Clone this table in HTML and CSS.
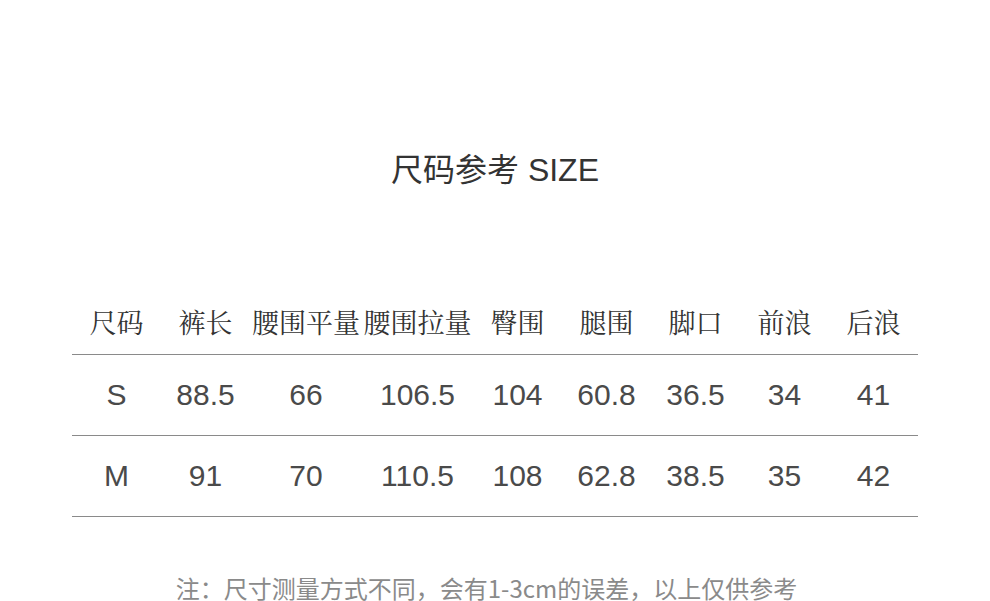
FILE: index.html
```html
<!DOCTYPE html>
<html lang="zh">
<head>
<meta charset="utf-8">
<title>尺码参考 SIZE</title>
<link rel="stylesheet" href="styles.css">
</head>
<body>
<main class="page">
  <h1 class="title">尺码参考 SIZE</h1>
  <div class="table">
    <div class="row head">
      <div class="cell">尺码</div>
      <div class="cell">裤长</div>
      <div class="cell">腰围平量</div>
      <div class="cell">腰围拉量</div>
      <div class="cell">臀围</div>
      <div class="cell">腿围</div>
      <div class="cell">脚口</div>
      <div class="cell">前浪</div>
      <div class="cell">后浪</div>
    </div>
    <div class="row data">
      <div class="cell">S</div>
      <div class="cell">88.5</div>
      <div class="cell">66</div>
      <div class="cell">106.5</div>
      <div class="cell">104</div>
      <div class="cell">60.8</div>
      <div class="cell">36.5</div>
      <div class="cell">34</div>
      <div class="cell">41</div>
    </div>
    <div class="row data">
      <div class="cell">M</div>
      <div class="cell">91</div>
      <div class="cell">70</div>
      <div class="cell">110.5</div>
      <div class="cell">108</div>
      <div class="cell">62.8</div>
      <div class="cell">38.5</div>
      <div class="cell">35</div>
      <div class="cell">42</div>
    </div>
  </div>
  <p class="note">注：尺寸测量方式不同，会有1-3cm的误差，以上仅供参考</p>
</main>
</body>
</html>
```

FILE: styles.css
```css
html, body {
  margin: 0;
  padding: 0;
  background: #ffffff;
}

.page {
  width: 990px;
  height: 601px;
  overflow: hidden;
  padding-top: 150px;
  box-sizing: border-box;
  display: flex;
  flex-direction: column;
  align-items: center;
}

.title {
  margin: 0;
  height: 40px;
  line-height: 40px;
  font-family: "Liberation Sans", "Noto Sans CJK SC", sans-serif;
  font-weight: 400;
  font-size: 32px;
  color: #333333;
  letter-spacing: 0;
}

.table {
  margin-top: 98px;
  width: 846px;
  display: flex;
  flex-direction: column;
}

.row {
  display: grid;
  grid-template-columns: 89px 89px 112px 111px 89px 89px 89px 89px 89px;
  border-bottom: 1px solid #8a8a8a;
}

.cell {
  display: flex;
  align-items: center;
  justify-content: center;
  white-space: nowrap;
}

.head .cell {
  height: 66px;
  font-family: "Noto Serif CJK SC", "Noto Sans CJK SC", serif;
  font-size: 27px;
  color: #333333;
}

.data .cell {
  height: 80px;
  font-family: "Liberation Sans", Arial, sans-serif;
  font-size: 30px;
  color: #4a4a4a;
}

.note {
  margin: 56px 0 0;
  padding-right: 17px;
  height: 30px;
  line-height: 30px;
  font-family: "Noto Sans CJK SC", sans-serif;
  font-size: 24px;
  color: #8a8a8a;
}
```
